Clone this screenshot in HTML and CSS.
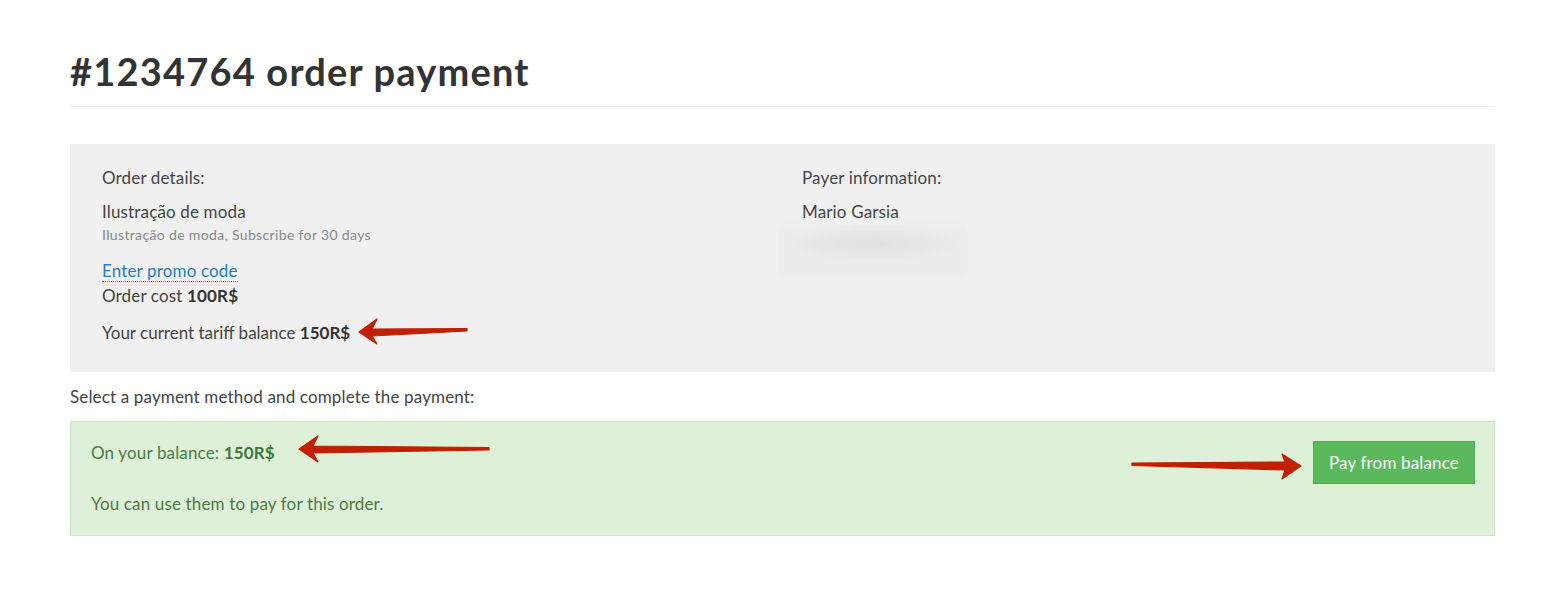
FILE: index.html
```html
<!DOCTYPE html>
<html>
<head>
<meta charset="utf-8">
<link rel="stylesheet" href="styles.css">
</head>
<body>
<div class="page">
  <h1 class="title">#1234764 order payment</h1>
  <div class="details">
    <div class="col">
      <div class="label">Order details:</div>
      <div class="product">Ilustração de moda</div>
      <div class="sub">Ilustração de moda, Subscribe for 30 days</div>
      <a class="promo" href="#">Enter promo code</a>
      <div class="cost">Order cost <b>100R$</b></div>
      <div class="tariff">Your current tariff balance <b>150R$</b></div>
    </div>
    <div class="col col-right">
      <div class="label">Payer information:</div>
      <div class="product">Mario Garsia</div>
      <div class="blur"></div>
    </div>
  </div>
  <div class="select">Select a payment method and complete the payment:</div>
  <div class="balance">
    <div class="balance-text">
      <div class="bal-line">On your balance: <b>150R$</b></div>
      <div class="bal-note">You can use them to pay for this order.</div>
    </div>
    <button class="pay">Pay from balance</button>
  </div>
</div>
<svg class="arrows" width="1543" height="611" viewBox="0 0 1543 611">
  <path d="M359 332 L377 319 L372 329 L467 328.5 L467 331 L372 336 L377 344 Z" fill="#c02000" stroke="#c02000" stroke-width="1.2" stroke-linejoin="round"/>
  <path d="M299 449 L318 436 L313 446 L489 447.5 L489 450 L313 453 L318 462 Z" fill="#c02000" stroke="#c02000" stroke-width="1.2" stroke-linejoin="round"/>
  <path d="M1301 466 L1282 454 L1285 462 L1132 463 L1132 465.5 L1285 470 L1282 479 Z" fill="#c02000" stroke="#c02000" stroke-width="1.2" stroke-linejoin="round"/>
</svg>
</body>
</html>
```
FILE: styles.css
```css
* { box-sizing: border-box; }
body {
  margin: 0;
  background: #fff;
  font-family: Lato, "Liberation Sans", sans-serif;
  color: #454545;
  font-size: 17px;
  letter-spacing: 0.15px;
}
.page {
  width: 1425px;
  margin-left: 70px;
  padding-top: 48px;
}
.title {
  margin: 0;
  font-size: 38px;
  line-height: 46px;
  font-weight: 700;
  letter-spacing: 1.2px;
  color: #333;
  padding-bottom: 12px;
  border-bottom: 1px solid #eee;
}
.details {
  margin-top: 37px;
  background: #f0f0f0;
  display: grid;
  grid-template-columns: 700px 1fr;
  padding: 23px 32px 28px;
  height: 228px;
}
.col { display: flex; flex-direction: column; position: relative; }
.label { line-height: 22px; }
.product { margin-top: 12px; line-height: 22px; }
.sub { font-size: 14px; letter-spacing: 0.35px; color: #888; line-height: 16px; margin-top: 4px; }
.promo {
  align-self: flex-start;
  margin-top: 18px;
  color: #1f7fc0;
  text-decoration: none;
  border-bottom: 1px dotted #1f7fc0;
  line-height: 20px;
}
.cost { line-height: 22px; margin-top: 3px; }
.tariff { line-height: 22px; margin-top: 15px; letter-spacing: 0; }
b { font-weight: 700; color: #333; }
.blur {
  margin-left: -24px;
  margin-top: 3px;
  width: 190px;
  height: 51px;
  background: radial-gradient(ellipse 85px 16px at 50% 35%, #e0e0e0, #e8e8e8 80%, #ececec);
  filter: blur(2px);
}
.select { margin-top: 15px; line-height: 20px; color: #444; }
.balance {
  margin-top: 14px;
  background: #dff0d8;
  border: 1px solid #d0e6c3;
  height: 115px;
  display: flex;
  justify-content: space-between;
  align-items: flex-start;
  padding: 19px 19px 0 20px;
  color: #4d7a45;
}
.bal-line { line-height: 24px; }
.bal-line b { color: #3c7a3c; }
.bal-note { margin-top: 29px; line-height: 20px; }
.pay {
  font-family: inherit;
  font-size: 17px;
  letter-spacing: 0.15px;
  color: #fff;
  background: #5cb85c;
  border: 1px solid #4cae4c;
  width: 162px;
  height: 43px;
  border-radius: 0;
  padding: 0;
}
.arrows { position: absolute; left: 0; top: 0; pointer-events: none; }
```
